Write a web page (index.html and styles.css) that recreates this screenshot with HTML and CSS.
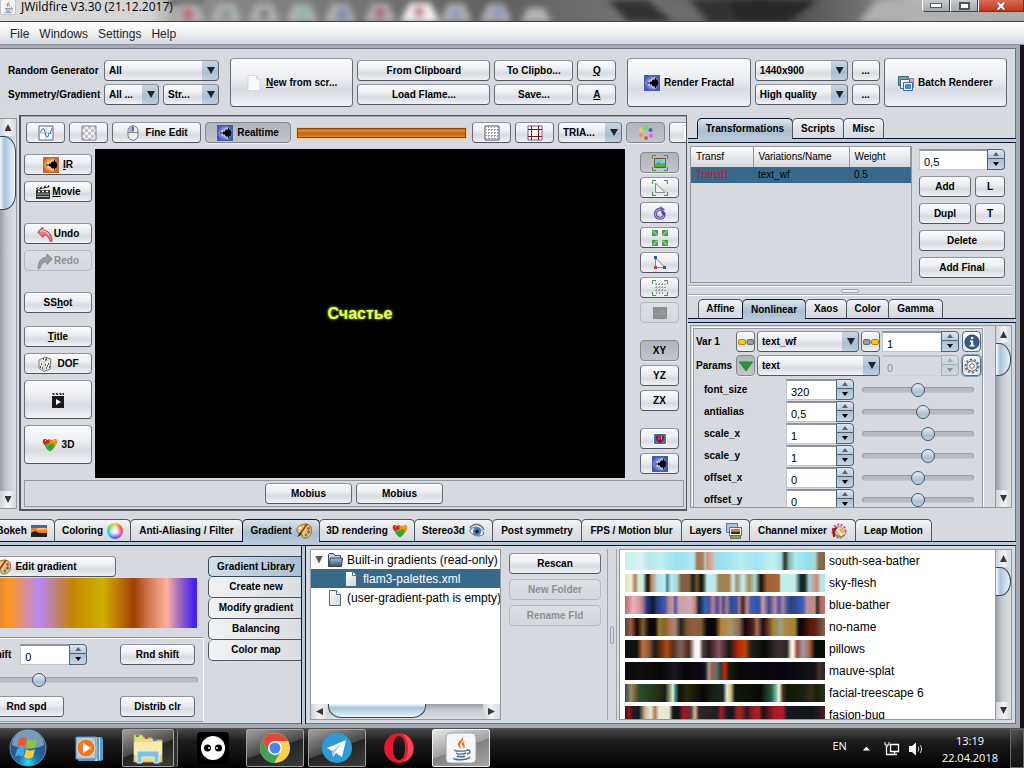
FILE: index.html
```html
<!DOCTYPE html>
<html lang="en">
<head>
	<meta charset="UTF-8">
	<meta name="viewport" content="width=device-width, initial-scale=1.0">
	<title>JWildfire V3.30 (21.12.2017)</title>
	<link rel="stylesheet" href="styles.css">
</head>
<body>
	<svg class="sprite" aria-hidden="true">
		<defs>
			<radialGradient id="g-blue"><stop offset="0" stop-color="#e8d8ff"/><stop offset=".6" stop-color="#7a86e0"/><stop offset="1" stop-color="#3f5cb0"/></radialGradient>
			<radialGradient id="g-warm"><stop offset="0" stop-color="#fff0a0"/><stop offset=".6" stop-color="#f0a050"/><stop offset="1" stop-color="#c8642c"/></radialGradient>
			<linearGradient id="g-doc" x2="1" y2="1"><stop offset="0" stop-color="#fff"/><stop offset="1" stop-color="#ccd6e0"/></linearGradient>
			<linearGradient id="g-folder" y2="1" x2="0"><stop offset="0" stop-color="#a8bfd2"/><stop offset="1" stop-color="#30506c"/></linearGradient>
			<radialGradient id="g-orb" cy=".9"><stop offset="0" stop-color="#30e0ff"/><stop offset=".5" stop-color="#1478b4"/><stop offset="1" stop-color="#285a88"/></radialGradient>
			<filter id="soft"><feGaussianBlur stdDeviation="3"/></filter>
		</defs>
		<symbol id="i-set" viewBox="0 0 16 16"><path d="M1 8l3-1 1-2 2 1 1-3 2-1 2 1 1 2 1 3-1 3-1 2-2 1-2-1-1-3-2 1-1-2z" fill="#fff" opacity=".45"/><path d="M3 7.600h3V6.500h2v-1l1-1h2V3h1v1.500h1l1 2v1l1 .5-1 .5v1l-1 2h-1V13h-1v-1.500H9l-1-1v-1H6V8.500H3z" fill="#000"/></symbol>
		<symbol id="i-fractal" viewBox="0 0 16 16"><path fill="url(#g-blue)" d="M0 0h16v16H0z"/><use href="#i-set"/></symbol>
		<symbol id="i-fire" viewBox="0 0 16 16"><path fill="url(#g-warm)" d="M0 0h16v16H0z"/><use href="#i-set"/></symbol>
		<symbol id="i-page" viewBox="0 0 16 16"><path d="M2 .5h8l4 4v11H2z" fill="#fafafa" stroke="#c8cace" stroke-width=".6"/><path d="M10 .5v4h4z" fill="#d8dade"/></symbol>
		<symbol id="i-file" viewBox="0 0 16 16"><path d="M2.500.5h7l4 4v11h-11z" fill="url(#g-doc)" stroke="#556678"/><path d="M9.500.5v4h4" fill="#fff" stroke="#556678"/></symbol>
		<symbol id="i-folder" viewBox="0 0 16 16"><path d="M1.500 14V2.500l1-1h4l1.500 2h5.500V7" fill="#c0d0de" stroke="#3c4c60"/><path d="M1.500 14.500L3.500 6h12l-1 8.500z" fill="url(#g-folder)" stroke="#304258"/></symbol>
		<symbol id="i-wave" viewBox="0 0 16 16"><path d="M1 1h14v14H1z" fill="#fff" stroke="#5f5f8c"/><path d="M8 1v14M1 8h14" stroke="#b8b8d8"/><path d="M2 8l2-4h2l2 7 2 1 1-4 1 1 2-6" fill="none" stroke="#2a7ac0"/></symbol>
		<symbol id="i-checker" viewBox="0 0 16 16"><path d="M1 1h14v14H1z" fill="#f2f2f2"/><path d="M1 1h3v3H1zm6 0h3v3H7zM4 4h3v3H4zm6 0h3v3h-3zM1 7h3v3H1zm6 0h3v3H7zm-3 3h3v3H4zm6 0h3v3h-3zM13 1h2v3h-2zm0 6h2v3h-2zM1 13h3v2H1zm6 0h3v2H7z" fill="#c4c4c8"/><path d="M1 1h14v14H1z" fill="none" stroke="#8a7a96"/></symbol>
		<symbol id="i-mouse" viewBox="0 0 16 16"><rect x="3" y=".7" width="10" height="14.600" rx="5" fill="#ececee" stroke="#777"/><path d="M3.400 7V5.500A4.500 4.500 0 0 1 8 1v6z" fill="#98b4ec"/><path d="M8 1v6M3 7.500h10" stroke="#888"/><path d="M8 2v4" stroke="#555" stroke-width="1.500"/></symbol>
		<symbol id="i-clap" viewBox="0 0 16 16"><path d="M1 6h14v9H1z" fill="#333"/><path d="M1 4l13-3 .5 2.200L2 6z" fill="#222"/><path d="M3 5l2-2m2 1l2-2m2 1l2-2M3 7.500h2m2 0h2m2 0h2" stroke="#fff" stroke-width="1.300"/><path d="M2 10h12M2 12.500h12" stroke="#aaa"/></symbol>
		<symbol id="i-undo" viewBox="0 0 16 16"><path d="M.7 6L6 1v3c5 .5 9 4 9 11.300h-2C12 11 10 9 6 9v2.500z" fill="#ec8080" stroke="#a83a40" stroke-width=".9"/><path d="M3 5.700l3-2v1.500c3 0 5 1.500 6 3.500" stroke="#ffd0d0" fill="none"/></symbol>
		<symbol id="i-redo" viewBox="0 0 16 16"><path d="M15.300 6L10 1v3C5 4.500 1 8 1 15.300h2C4 11 6 9 10 9v2.500z" fill="#9a9ca0" stroke="#84868a" stroke-width=".9"/></symbol>
		<symbol id="i-dice" viewBox="0 0 16 16"><path d="M2 4l6-3 6 2-1 10-6 2.500L2 12z" fill="#f6f4e6" stroke="#777"/><path d="M2 4l5 2 7-3M7 6v9.500" fill="none" stroke="#aaa" stroke-width=".7"/><path d="M6 3h1M9 3h1M8 4h1M4 8h1M3 11h1M5 12h1M8 9h1M11 8h1M9 12h1M12 11h1M10 10h1" stroke="#222" stroke-width="1.500"/></symbol>
		<symbol id="i-clip" viewBox="0 0 16 16"><path d="M2 4h12v12H2z" fill="#1a1a1a"/><path d="M2 1h2l1 2H3zm3.500 0h2l1 2h-2zM9 1h2l1 2h-2zm3 0h2v2h-1z" fill="#333"/><path d="M6 7l5 3-5 3z" fill="#fff"/></symbol>
		<symbol id="i-hearts" viewBox="0 0 16 16"><path d="M5 10C2 8 .5 6 .7 4 1 1.500 4 1.500 5 3.300 6 1.500 9 2 8.500 5z" fill="#de2018"/><path d="M11 11c3-2 4.300-4.500 4.300-6.500 0-3-3-3.500-4.300-1.200C9.500 1.500 7 2.500 7.500 5z" fill="#f09010"/><path d="M8 14.500C5 12.500 3 10.500 3.300 8 3.500 5.500 7 5.300 8 7.500 9 5.300 12.300 5.500 12.600 8c.2 2.500-1.600 4.500-4.600 6.500z" fill="#30a820"/><path d="M3 4l1-1M12 4l1-.5M5.500 8.500l1-1" stroke="#fff" opacity=".7"/></symbol>
		<symbol id="i-grid" viewBox="0 0 16 16"><path d="M1 1h14v14H1z" fill="#fff" stroke="#5a5070"/><path d="M4.500 1v14M7.500 1v14M10.500 1v14M13.500 1v14M1 4.500h14M1 7.500h14M1 10.500h14M1 13.500h14" stroke="#999" stroke-dasharray="2 1"/></symbol>
		<symbol id="i-guides" viewBox="0 0 16 16"><path d="M1 1h14v14H1z" fill="#fff" stroke="#706080"/><path d="M4.500 1v14M11.500 1v14M1 4.500h14M1 11.500h14" stroke="#7c1018"/></symbol>
		<symbol id="i-dots" viewBox="0 0 16 16"><circle cx="8" cy="2.500" r="2" fill="#60dc60"/><circle cx="12.500" cy="5" r="2" fill="#5858dc"/><circle cx="13" cy="10.500" r="2" fill="#ec58e8"/><circle cx="8" cy="13" r="2" fill="#e05058"/><circle cx="3" cy="10.500" r="2" fill="#f09050"/><circle cx="3" cy="5" r="2" fill="#ecd058"/></symbol>
		<symbol id="i-corners" viewBox="0 0 16 16"><path d="M.5 4V.5H4M12 .5h3.500V4M15.500 12v3.500H12M4 15.500H.5V12" fill="none" stroke="#3c9448"/></symbol>
		<symbol id="i-photo" viewBox="0 0 16 16"><use href="#i-corners"/><path d="M2.500 3.500h11v9h-11z" fill="#6cc8f0" stroke="#805030"/><path d="M3 9l4-2 3 2 3-1v4H3z" fill="#54b040"/><path d="M9 4h4v3z" fill="#f0c040"/></symbol>
		<symbol id="i-tri" viewBox="0 0 16 16"><use href="#i-corners"/><path d="M3.500 3v9.500H13z" fill="#f4f4f4" stroke="#888"/></symbol>
		<symbol id="i-spin" viewBox="0 0 16 16"><path d="M11 4.500C7 3 3.500 5.500 3.500 9c0 5 7 5.500 8.500 1.500.5-2-1-3.500-2.500-3" fill="none" stroke="#54409a" stroke-width="3"/><path d="M11 4.500C7 3 3.500 5.500 3.500 9c0 5 7 5.500 8.500 1.500" fill="none" stroke="#b8a8e4" stroke-width="1.200"/><path d="M8 1l5 3.500-4 3z" fill="#7460b4"/></symbol>
		<symbol id="i-four" viewBox="0 0 16 16"><path d="M0 0h6v5L5 6H0zM10 0h6v6h-5l-1-1zM0 10h5l1 1v5H0zM11 10h5v6h-6v-5z" fill="#4c9c50"/><path d="M1 1l4 4M15 1l-4 4M1 15l4-4M15 15l-4-4" stroke="#98cc98" stroke-width="1.500"/></symbol>
		<symbol id="i-pts" viewBox="0 0 16 16"><path d="M3.500 3v9.500H13z" fill="#f4f4f4" stroke="#888"/><path d="M2 1h3v3H2zM11 11h3v3h-3z" fill="#2858a8"/><path d="M2 11h3v3H2z" fill="#e03030"/></symbol>
		<symbol id="i-cgrid" viewBox="0 0 16 16"><use href="#i-corners"/><path d="M4.500 3v11M7.500 3v11M10.500 3v11M3 4.500h11M3 7.500h11M3 10.500h11" stroke="#999" stroke-dasharray="2 1"/></symbol>
		<symbol id="i-grey" viewBox="0 0 16 16"><path d="M1 2h14v12H1z" fill="#8c8e90"/><path d="M2 8h6V4l6 3v3H2z" fill="#a0a2a4" opacity=".5"/></symbol>
		<symbol id="i-balloon" viewBox="0 0 16 16"><path d="M1.500 2.500h13v11h-13z" fill="#4470b0" stroke="#fff"/><path d="M8 12.500C2 8 3 3.500 8 3.500s6 4.500 0 9z" fill="#801848"/><path d="M7 4v5" stroke="#e04040" stroke-width="1.500"/><path d="M9.500 4.500v4" stroke="#e0a0c0"/></symbol>
		<symbol id="i-batch" viewBox="0 0 16 16"><path d="M.5 1.500h10v9H.5z" fill="#70b068" stroke="#486088"/><path d="M7.500 3.500h8v9h-8z" fill="#e8a0b0" stroke="#7888a8"/><path d="M2.500 4.500h9v9h-9z" fill="#f4f8fc" stroke="#4068a0"/><path d="M5.500 7.500h9v8h-9z" fill="#fff" stroke="#4068a0"/><path d="M7 9h6v5H7z" fill="#4888d0"/></symbol>
		<symbol id="i-sunset" viewBox="0 0 16 16"><path d="M0 2h16v12H0z" fill="#4068b0"/><path d="M0 5h16v5H0z" fill="#f08030"/><path d="M6 5h9v2H6z" fill="#f0c070"/><path d="M0 10l4-2 4 2h8v4H0z" fill="#202020"/></symbol>
		<symbol id="i-palette" viewBox="0 0 16 16"><path d="M1 6C3 1 12-1 15 4c2 5-1 11-6 11-2 0-3-1-3-3 0-3-6 0-5-6z" fill="#f0c070" stroke="#9c6420"/><circle cx="12.500" cy="5.500" r="1.400" fill="#e04040"/><circle cx="12.500" cy="9" r="1.400" fill="#3060e0"/><circle cx="10" cy="12" r="1.400" fill="#30a040"/><circle cx="4" cy="5" r="1.300" fill="#fff"/><path d="M11 1L4 11" stroke="#7c4818" stroke-width="1.600"/><path d="M4.500 9L1 14l4-2z" fill="#202020"/></symbol>
		<symbol id="i-eye" viewBox="0 0 16 16"><path d="M.5 8C4 2 12 3 15 11c-4 3-10 3-14.500-3z" fill="#f4f4f8" stroke="#667"/><circle cx="8" cy="8.500" r="4" fill="#4080c0"/><circle cx="8" cy="8.500" r="1.800" fill="#102030"/><path d="M1 5C4 0 12 0 15 7" fill="none" stroke="#707478" stroke-width="1.500"/></symbol>
		<symbol id="i-layers" viewBox="0 0 16 16"><path d="M.5.5h11v9H.5z" fill="#a8c4e8" stroke="#607898"/><path d="M4.500 12.500h10v3h-10z" fill="#70b050" stroke="#607048"/><path d="M3.500 4.500h12v8h-12z" fill="#fff" stroke="#606870"/><path d="M5 6h9v5H5z" fill="#e87020"/><path d="M5 9h9v2H5z" fill="#402018"/></symbol>
		<symbol id="i-mixer" viewBox="0 0 16 16"><circle cx="8" cy="8" r="6.500" fill="none" stroke="#c84cb0" stroke-width="2" stroke-dasharray="2 1.500"/><path d="M3 8a6 6 0 0 0 10 4" fill="none" stroke="#4ca860" stroke-width="2"/><path d="M4 7l5-4 6 7-5 4z" fill="#f4e4c8" stroke="#c08020"/><path d="M1 6l6-3-3 6v5H2z" fill="#b01818"/><path d="M9 6l3 4" stroke="#f0a020" stroke-width="2"/></symbol>
		<symbol id="i-led-l" viewBox="0 0 16 16"><rect x=".5" y="5.500" width="7" height="5" rx="1.500" fill="#f8c818" stroke="#b08808"/><rect x="9" y="5.500" width="6.500" height="5" rx="1.500" fill="#9a9c9e" stroke="#66686a"/></symbol>
		<symbol id="i-led-r" viewBox="0 0 16 16"><rect x=".5" y="5.500" width="6.500" height="5" rx="1.500" fill="#9a9c9e" stroke="#66686a"/><rect x="8.500" y="5.500" width="7" height="5" rx="1.500" fill="#f8c818" stroke="#b08808"/></symbol>
		<symbol id="i-down" viewBox="0 0 16 16"><path d="M1.500 4h13L8 13z" fill="#18a020" stroke="#388040"/></symbol>
		<symbol id="i-info" viewBox="0 0 16 16"><circle cx="8" cy="8" r="7" fill="#3c5c84" stroke="#203858"/><path d="M7 3h2.200v2H7zM6 6.500h3.200V11h1.300v1.500H5.700V11H7V8H6z" fill="#fff"/></symbol>
		<symbol id="i-gear" viewBox="0 0 16 16"><circle cx="8" cy="8" r="6.600" fill="none" stroke="#666a70" stroke-width="1.600" stroke-dasharray="2.200 1.900"/><circle cx="8" cy="8" r="5.200" fill="#e8eaee" stroke="#666a70"/><circle cx="8" cy="8" r="2.300" fill="#fff" stroke="#666a70"/></symbol>
		<symbol id="i-java" viewBox="0 0 32 32"><rect x="1" y="1" width="30" height="30" rx="4" fill="#f4f6f8" stroke="#98a4b0"/><path d="M17 4c2 4-5 5-4 9 1 2 2 3 3 4 0-3-2-4 0-6s3-4 1-7zM20 9c-4 2-4 3-2 5 1 1 0 2-1 3 4-2 3-3 2-5 0-1 0-2 1-3z" fill="#e87020"/><path d="M10 18c-2 1 10 2 13 0M11 21c3 2 8 1 10 0M12 24c3 1 6 1 8 0M9 26c-2 2 13 3 16-1M22 18c4-1 4 3 0 4" fill="none" stroke="#486c90" stroke-width="1.400"/></symbol>
	</svg>

	<header class="titlebar">
		<svg class="glass" viewBox="0 0 860 22" preserveAspectRatio="xMinYMin slice" aria-hidden="true">
			<g filter="url(#soft)">
				<path d="M440 0h130l30 22H460zM0 0h34v4H0z" fill="#303030"/>
				<path d="M480 0h40l20 22h-34z" fill="#6c6c6c"/>
				<path d="M560 0h90l-30 22h-50z" fill="#262626"/>
				<path d="M690 22l20-22h150v22z" fill="#b0b0b0"/>
				<path d="M5 22l8-18h16l8 18zM42 22l8-18h16l8 18zM80 22l8-18h16l8 18zM118 22l8-18h16l8 18zM156 22l8-18h16l8 18zM196 22l8-18h16l8 18zM272 22l8-18h16l8 18zM312 22l8-18h16l8 18zM352 22l8-14h16l8 14z" fill="#b4b4b4"/>
				<path d="M232 22l10-19h20l10 19z" fill="#f4f4f4"/>
				<g opacity=".8">
					<circle cx="20" cy="14" r="6" fill="#c04858"/><circle cx="58" cy="14" r="6" fill="#7c9484"/><circle cx="96" cy="14" r="5" fill="#606470"/><circle cx="135" cy="13" r="6" fill="#78bc98"/><circle cx="174" cy="14" r="7" fill="#7488ac"/><circle cx="212" cy="13" r="6" fill="#a85868"/><circle cx="251" cy="12" r="6" fill="#c06070"/><circle cx="288" cy="14" r="6" fill="#8890c0"/><circle cx="330" cy="13" r="7" fill="#8c94c4"/>
				</g>
			</g>
		</svg>
		<svg class="app-icon"><use href="#i-java"/></svg>
		<h1>JWildfire V3.30 (21.12.2017)</h1>
		<div class="win-buttons">
			<button aria-label="Minimize"><i class="min"></i></button>
			<button aria-label="Maximize"><i class="max"></i></button>
			<button class="close" aria-label="Close"><svg viewBox="0 0 12 8"><path d="M1 0h3l2 2 2-2h3L8 4l3 4H8L6 6 4 8H1l3-4z" fill="#fff" stroke="#603028" stroke-width=".6"/></svg></button>
		</div>
	</header>

	<nav class="menubar">
		<a href="#file">File</a>
		<a href="#windows">Windows</a>
		<a href="#settings">Settings</a>
		<a href="#help">Help</a>
	</nav>

	<main class="frame">
		<!-- top toolbar -->
		<section class="toolbar">
			<div class="random">
				<label for="rnd-gen">Random Generator</label>
				<span class="combo wide"><select id="rnd-gen"><option>All</option></select></span>
				<label for="rnd-sym">Symmetry/Gradient</label>
				<span class="combo"><select id="rnd-sym"><option>All ...</option></select></span>
				<span class="combo"><select aria-label="Gradient"><option>Str...</option></select></span>
			</div>
			<button class="btn big gap-l"><svg><use href="#i-page"/></svg><span><u>N</u>ew from scr...</span></button>
			<div class="clip">
				<button class="btn">From Clipboard</button>
				<button class="btn">To Clipbo...</button>
				<button class="btn"><u>Q</u></button>
				<button class="btn">Load Flame...</button>
				<button class="btn">Save...</button>
				<button class="btn"><u>A</u></button>
			</div>
			<button class="btn big gap-l"><svg><use href="#i-fractal"/></svg>Render Fractal</button>
			<div class="quality">
				<span class="combo"><select aria-label="Resolution"><option>1440x900</option></select></span>
				<button class="btn">...</button>
				<span class="combo"><select aria-label="Quality"><option>High quality</option></select></span>
				<button class="btn">...</button>
			</div>
			<button class="btn big"><svg><use href="#i-batch"/></svg>Batch Renderer</button>
		</section>

		<section class="middle">
			<div class="vscroll thumbs">
				<button class="arrow up" aria-label="Scroll up"></button>
				<div class="vtrack"><div class="vthumb long"></div></div>
				<button class="arrow down" aria-label="Scroll down"></button>
			</div>

			<!-- flame preview -->
			<div class="preview">
				<div class="preview-top">
					<button class="btn icon" aria-label="Waves"><svg><use href="#i-wave"/></svg></button>
					<button class="btn icon" aria-label="Transparency"><svg><use href="#i-checker"/></svg></button>
					<button class="btn fine"><svg><use href="#i-mouse"/></svg>Fine Edit</button>
					<button class="btn realtime pressed"><svg><use href="#i-fractal"/></svg>Realtime</button>
					<div class="progress" role="progressbar" aria-label="Render progress"></div>
					<button class="btn icon" aria-label="Grid"><svg><use href="#i-grid"/></svg></button>
					<button class="btn icon" aria-label="Guides"><svg><use href="#i-guides"/></svg></button>
					<span class="combo tria"><select aria-label="Triangle style"><option>TRIA...</option></select></span>
					<button class="btn icon pressed" aria-label="Colors"><svg><use href="#i-dots"/></svg></button>
					<button class="btn icon last" aria-label="Page"><svg><use href="#i-page"/></svg></button>
				</div>
				<div class="preview-main">
					<div class="side-left">
						<button class="btn"><svg><use href="#i-fire"/></svg><span><u>I</u>R</span></button>
						<button class="btn tight"><svg><use href="#i-clap"/></svg><span><u>M</u>ovie</span></button>
						<button class="btn tight group"><svg><use href="#i-undo"/></svg>Undo</button>
						<button class="btn tight" disabled><svg><use href="#i-redo"/></svg>Redo</button>
						<button class="btn group"><span>SS<u>h</u>ot</span></button>
						<button class="btn half"><span><u>T</u>itle</span></button>
						<button class="btn"><svg><use href="#i-dice"/></svg>DOF</button>
						<button class="btn tall" aria-label="Animation"><svg><use href="#i-clip"/></svg></button>
						<button class="btn tall"><svg><use href="#i-hearts"/></svg>3D</button>
					</div>
					<div class="canvas"><span>Счастье</span></div>
					<div class="side-right">
						<button class="btn icon pressed" aria-label="Image"><svg><use href="#i-photo"/></svg></button>
						<button class="btn icon" aria-label="Move triangle"><svg><use href="#i-tri"/></svg></button>
						<button class="btn icon" aria-label="Rotate"><svg><use href="#i-spin"/></svg></button>
						<button class="btn icon" aria-label="Scale"><svg><use href="#i-four"/></svg></button>
						<button class="btn icon" aria-label="Edit points"><svg><use href="#i-pts"/></svg></button>
						<button class="btn icon" aria-label="View grid"><svg><use href="#i-cgrid"/></svg></button>
						<button class="btn icon" aria-label="Gradient" disabled><svg><use href="#i-grey"/></svg></button>
						<button class="btn icon group pressed">XY</button>
						<button class="btn icon">YZ</button>
						<button class="btn icon">ZX</button>
						<button class="btn icon group" aria-label="Background"><svg><use href="#i-balloon"/></svg></button>
						<button class="btn icon" aria-label="Render"><svg><use href="#i-fractal"/></svg></button>
					</div>
				</div>
				<div class="mobius">
					<button class="btn">Mobius</button>
					<button class="btn">Mobius</button>
				</div>
			</div>

			<!-- transformations -->
			<aside class="editor">
				<div class="tabs tabs-trans" role="tablist">
					<button class="tab active" role="tab">Transformations</button>
					<button class="tab" role="tab">Scripts</button>
					<button class="tab" role="tab">Misc</button>
				</div>
				<div class="trans">
					<div class="trans-table">
						<table>
							<thead>
								<tr><th class="c1">Transf</th><th class="c2">Variations/Name</th><th>Weight</th></tr>
							</thead>
							<tbody>
								<tr><td class="red">Transf1</td><td>text_wf</td><td>0.5</td></tr>
							</tbody>
						</table>
					</div>
					<div class="trans-buttons">
						<span class="spinner full"><input type="text" value="0,5" aria-label="Weight"><button aria-label="Up"></button><button aria-label="Down"></button></span>
						<button class="btn">Add</button>
						<button class="btn">L</button>
						<button class="btn">Dupl</button>
						<button class="btn">T</button>
						<button class="btn full">Delete</button>
						<button class="btn full">Add Final</button>
					</div>
				</div>
				<div class="hsplit"><i></i></div>
				<div class="tabs tabs-edit" role="tablist">
					<button class="tab" role="tab">Affine</button>
					<button class="tab active" role="tab">Nonlinear</button>
					<button class="tab" role="tab">Xaos</button>
					<button class="tab" role="tab">Color</button>
					<button class="tab" role="tab">Gamma</button>
				</div>
				<div class="nonlinear">
					<div class="vars">
						<div class="var-row">
							<label for="var1">Var 1</label>
							<button class="btn sq" aria-label="Previous"><svg><use href="#i-led-l"/></svg></button>
							<span class="combo"><select id="var1"><option>text_wf</option></select></span>
							<button class="btn sq" aria-label="Next"><svg><use href="#i-led-r"/></svg></button>
							<span class="spinner"><input type="text" value="1" aria-label="Variation amount"><button aria-label="Up"></button><button aria-label="Down"></button></span>
							<button class="btn sq info" aria-label="Info"><svg><use href="#i-info"/></svg></button>
						</div>
						<div class="var-row">
							<label for="params">Params</label>
							<button class="btn sq pressed" aria-label="Collapse"><svg><use href="#i-down"/></svg></button>
							<span class="combo span2"><select id="params"><option>text</option></select></span>
							<span class="spinner off"><input type="text" value="0" aria-label="Parameter" disabled><button aria-label="Up" disabled></button><button aria-label="Down" disabled></button></span>
							<button class="btn sq info focus" aria-label="Settings"><svg><use href="#i-gear"/></svg></button>
						</div>
						<div class="param">
							<label for="p1">font_size</label>
							<span class="spinner"><input type="text" id="p1" value="320"><button aria-label="Up"></button><button aria-label="Down"></button></span>
							<input type="range" value="50" aria-label="font_size">
						</div>
						<div class="param">
							<label for="p2">antialias</label>
							<span class="spinner"><input type="text" id="p2" value="0,5"><button aria-label="Up"></button><button aria-label="Down"></button></span>
							<input type="range" value="55" aria-label="antialias">
						</div>
						<div class="param">
							<label for="p3">scale_x</label>
							<span class="spinner"><input type="text" id="p3" value="1"><button aria-label="Up"></button><button aria-label="Down"></button></span>
							<input type="range" value="60" aria-label="scale_x">
						</div>
						<div class="param">
							<label for="p4">scale_y</label>
							<span class="spinner"><input type="text" id="p4" value="1"><button aria-label="Up"></button><button aria-label="Down"></button></span>
							<input type="range" value="60" aria-label="scale_y">
						</div>
						<div class="param">
							<label for="p5">offset_x</label>
							<span class="spinner"><input type="text" id="p5" value="0"><button aria-label="Up"></button><button aria-label="Down"></button></span>
							<input type="range" value="50" aria-label="offset_x">
						</div>
						<div class="param">
							<label for="p6">offset_y</label>
							<span class="spinner"><input type="text" id="p6" value="0"><button aria-label="Up"></button><button aria-label="Down"></button></span>
							<input type="range" value="50" aria-label="offset_y">
						</div>
					</div>
					<div class="vscroll">
						<button class="arrow up" aria-label="Scroll up"></button>
						<div class="vtrack"><div class="vthumb"></div></div>
						<button class="arrow down" aria-label="Scroll down"></button>
					</div>
				</div>
			</aside>
		</section>

		<!-- bottom tabs -->
		<div class="tabs tabs-bottom" role="tablist">
			<button class="tab" role="tab"><span>Bokeh</span><svg><use href="#i-sunset"/></svg></button>
			<button class="tab" role="tab">Coloring<i class="wheel"></i></button>
			<button class="tab" role="tab">Anti-Aliasing / Filter</button>
			<button class="tab active" role="tab">Gradient<svg><use href="#i-palette"/></svg></button>
			<button class="tab" role="tab">3D rendering<svg><use href="#i-hearts"/></svg></button>
			<button class="tab" role="tab">Stereo3d<svg><use href="#i-eye"/></svg></button>
			<button class="tab" role="tab">Post symmetry</button>
			<button class="tab" role="tab">FPS / Motion blur</button>
			<button class="tab" role="tab">Layers<svg><use href="#i-layers"/></svg></button>
			<button class="tab" role="tab">Channel mixer<svg><use href="#i-mixer"/></svg></button>
			<button class="tab" role="tab">Leap Motion</button>
		</div>

		<section class="bottom">
			<div class="edit">
				<button class="btn edit-btn"><svg><use href="#i-palette"/></svg>Edit gradient</button>
				<div class="strip current"></div>
				<div class="shift">
					<div class="shift-row">
						<label for="shift">Shift</label>
						<span class="spinner"><input type="text" id="shift" value="0"><button aria-label="Up"></button><button aria-label="Down"></button></span>
						<button class="btn">Rnd shift</button>
					</div>
					<input type="range" value="22" aria-label="Shift">
					<div class="shift-row">
						<button class="btn">Rnd spd</button>
						<button class="btn">Distrib clr</button>
					</div>
				</div>
			</div>
			<div class="vtabs" role="tablist">
				<button class="active" role="tab">Gradient Library</button>
				<button role="tab">Create new</button>
				<button role="tab">Modify gradient</button>
				<button role="tab">Balancing</button>
				<button role="tab">Color map</button>
			</div>
			<div class="library">
				<div class="tree">
					<ul>
						<li><i class="open"></i><svg><use href="#i-folder"/></svg>Built-in gradients (read-only)</li>
						<li class="child selected"><svg><use href="#i-file"/></svg>flam3-palettes.xml</li>
						<li class="leaf"><svg><use href="#i-file"/></svg>(user-gradient-path is empty)</li>
					</ul>
					<div class="hscroll">
						<button class="arrow left" aria-label="Scroll left"></button>
						<div class="htrack"><div class="hthumb"></div></div>
						<button class="arrow right" aria-label="Scroll right"></button>
					</div>
				</div>
				<div class="folder-buttons">
					<button class="btn">Rescan</button>
					<button class="btn" disabled>New Folder</button>
					<button class="btn" disabled>Rename Fld</button>
				</div>
				<div class="vsplit"><i></i></div>
				<div class="palettes">
					<ul>
						<li><i class="strip sea"></i>south-sea-bather</li>
						<li><i class="strip sky"></i>sky-flesh</li>
						<li><i class="strip blue"></i>blue-bather</li>
						<li><i class="strip noname"></i>no-name</li>
						<li><i class="strip pillows"></i>pillows</li>
						<li><i class="strip mauve"></i>mauve-splat</li>
						<li><i class="strip tree-scape"></i>facial-treescape 6</li>
						<li><i class="strip bug"></i>fasion-bug</li>
					</ul>
					<div class="vscroll">
						<button class="arrow up" aria-label="Scroll up"></button>
						<div class="vtrack"><div class="vthumb short"></div></div>
						<button class="arrow down" aria-label="Scroll down"></button>
					</div>
				</div>
			</div>
		</section>
	</main>

	<footer class="taskbar">
		<button class="start" aria-label="Start">
			<svg viewBox="0 0 38 38"><circle cx="19" cy="19" r="18" fill="url(#g-orb)" stroke="#6c94b0"/><path d="M3 16a16 15 0 0 1 32 0c-10 5-22 5-32 0z" fill="#c8dcec" opacity=".5"/><path d="M10 10c3-2 5-2 8 0l-2 8c-3-2-5-2-8 0z" fill="#e8582c"/><path d="M19 10c3 2 5 2 9 0l-2 8c-3 2-6 2-9 0z" fill="#8cc43c"/><path d="M8 20c3-2 5-2 8 0l-2 8c-3-2-5-2-8 0z" fill="#48a4e4"/><path d="M17 20c3 2 6 2 9 0l-2 8c-3 2-6 2-9 0z" fill="#f8cc38"/></svg>
		</button>
		<button class="task" aria-label="Media Player"><svg viewBox="0 0 32 32"><path d="M5 5h24l1 3v20l-3 1H5z" fill="#5c9cc8"/><path d="M22 5h2v24h-2zM26 6h1v22h-1z" fill="#c8e4f4"/><path d="M3 5h20v22H3z" fill="#a0cce4" stroke="#6090b0"/><circle cx="13" cy="16" r="9" fill="#f07820" stroke="#fff" stroke-width=".6"/><path d="M10 11l8 5-8 5z" fill="#fff"/></svg></button>
		<button class="task open-task stack" aria-label="Explorer"><svg viewBox="0 0 32 32"><path d="M2 3h8l2 3h8l1 2h9v22H2z" fill="#f0d880" stroke="#c8a850"/><path d="M4 3h3v2H4z" fill="#30b030"/><path d="M13 5h3v2h-3z" fill="#e04020"/><path d="M21 7h4v2h-4z" fill="#3090e0"/><path d="M2 10h28v13H2z" fill="#f8ecac"/><path d="M5 31V21c0-2 1-2 2-2h18c1 0 2 0 2 2v10h-5v-6H10v6z" fill="#80c4e0" stroke="#d8f0f8"/></svg></button>
		<button class="task" aria-label="Alien"><svg viewBox="0 0 32 32"><rect width="32" height="32" rx="4"/><circle cx="16" cy="16" r="12" fill="#fff"/><circle cx="10.500" cy="16" r="3.500"/><circle cx="21.500" cy="16" r="3.500"/><circle cx="12" cy="16" r="1" fill="#fff"/><circle cx="20" cy="16" r="1" fill="#fff"/></svg></button>
		<button class="task open-task" aria-label="Chrome"><svg viewBox="0 0 32 32"><circle cx="16" cy="16" r="15" fill="#fcd048"/><path d="M3 8.500A15 15 0 0 1 29 9H16l-7 10z" fill="#e04838"/><path d="M3 8.500l6.500 11.300L22 19l-7 12A15 15 0 0 1 3 8.500z" fill="#40a05c"/><circle cx="16" cy="16" r="7" fill="#fff"/><circle cx="16" cy="16" r="5.500" fill="#4884f0"/></svg></button>
		<button class="task open-task" aria-label="Telegram"><svg viewBox="0 0 32 32"><circle cx="16" cy="16" r="15" fill="#2c9cd8"/><path d="M6 16l19-8-4 17-6-4-3 4-1-6z" fill="#fff"/><path d="M11 19l10-8-7 9-2 5z" fill="#a8cce4"/></svg></button>
		<button class="task" aria-label="Opera"><svg viewBox="0 0 32 32"><path fill-rule="evenodd" d="M16 1a15 15 0 1 0 .1 0zM16 4c4 0 6 5 6 12s-2 12-6 12-6-5-6-12 2-12 6-12z" fill="#e41830"/><path d="M19 2c14 3 15 25 1 28 4-3 5-8 5-14s-2-11-6-14z" fill="#f84c58"/></svg></button>
		<button class="task open-task current" aria-label="JWildfire"><svg viewBox="0 0 32 32"><use href="#i-java"/></svg></button>
		<div class="tray">
			<span class="lang">EN</span>
			<i class="more"></i>
			<svg viewBox="0 0 16 16"><path d="M6.500 3.500h8v7h-8zM8 13.500h5M10.500 11v2M2.500 5v8.500H8" fill="none" stroke="#fff" stroke-width="1.300"/><path d="M1 1v3h4V1M3 4v2" fill="none" stroke="#fff"/></svg>
			<svg viewBox="0 0 16 16"><path d="M1 5h3l4-3.500v13L4 11H1z" fill="#fff"/><path d="M10 5.500c1 1.500 1 3.500 0 5M12 4c2 2.500 2 5.500 0 8" fill="none" stroke="#ddd"/></svg>
			<time>13:19<br>22.04.2018</time>
		</div>
		<button class="desktop" aria-label="Show desktop"></button>
	</footer>
</body>
</html>
```
FILE: styles.css
```css
*, *:before, *:after {
	box-sizing: border-box;
}
html, body {
	height: 100%;
	margin: 0;
}
body {
	display: flex;
	flex-direction: column;
	overflow: hidden;
	background: #171014;
	color: #000;
	font: bold 10px/12px "Liberation Sans", Arial, sans-serif;
}
button, input, select {
	font: inherit;
	color: inherit;
	margin: 0;
}
button {
	padding: 0;
	border: 0;
}
svg {
	width: 16px;
	height: 16px;
	flex: none;
}
ul {
	list-style: none;
	margin: 0;
	padding: 0;
}
.sprite {
	position: absolute;
	width: 0;
	height: 0;
}

/* title bar */
.titlebar {
	position: relative;
	display: flex;
	flex: none;
	height: 21px;
	overflow: hidden;
	background: linear-gradient(90deg, #dcdcdc 0, #d4d4d4 150px, #8c8c8c 190px, #606060 500px, #747474 640px, #404040 760px, #707070 860px, #c0c0c0 920px, #9c9c9c 100%);
}
.glass {
	position: absolute;
	left: 168px;
	top: 0;
	width: 860px;
	height: 22px;
}
.app-icon {
	margin-top: -1px;
}
.titlebar h1 {
	flex: 1;
	margin: 0 0 0 5px;
	font: 12px/14px "Open Sans", sans-serif;
}
.win-buttons {
	position: relative;
	display: flex;
	height: 12px;
}
.win-buttons button {
	width: 28px;
	border: 1px solid #404448;
	border-top: 0;
	border-left-color: #fff;
	background: linear-gradient(#c8ccd0, #a4a8ac);
}
.win-buttons button:first-child {
	border-radius: 0 0 0 4px;
}
.win-buttons .close {
	width: 46px;
	background: linear-gradient(#d86c54, #c03820);
}
.win-buttons svg {
	display: block;
	width: 12px;
	height: 8px;
	margin: 0 auto;
}
.win-buttons i {
	display: block;
	margin: 0 auto;
	background: #fff;
	border: 1px solid #50545a;
}
.win-buttons .min {
	width: 12px;
	height: 5px;
}
.win-buttons .max {
	width: 11px;
	height: 8px;
	border-width: 2px;
}

.menubar {
	display: flex;
	flex: none;
	gap: 10px;
	height: 24px;
	padding: 5px 10px 0;
	border-top: 1px solid #404448;
	border-bottom: 1px solid #8c929c;
	background: linear-gradient(#fff, #f4f5f7 40%, #d9dce2 90%);
	font-size: 12px;
	font-weight: normal;
	line-height: 15px;
}
.menubar a {
	color: #222428;
	text-decoration: none;
}

.frame {
	display: flex;
	flex: 1;
	flex-direction: column;
	min-height: 0;
	margin-right: 4px;
	border: solid #a3a9b5;
	border-width: 3px 4px 4px 0;
	background: #d6d9df;
	box-shadow: inset -1px 1px #6c7484, inset 0 -1px #6c7484;
}

/* buttons */
.btn {
	display: flex;
	align-items: center;
	justify-content: center;
	gap: 4px;
	height: 21px;
	border: 1px solid #686c74;
	border-top-color: #90949c;
	border-bottom-color: #50545c;
	border-radius: 4px;
	background: linear-gradient(#fbfbfd, #eceef1 40%, #d8dbe1 65%, #f0f2f6);
	white-space: nowrap;
}
.btn:disabled {
	color: #8e8f91;
	border-color: #b4b8c0;
	background: linear-gradient(#dcdfe4, #d4d7dd);
}
.btn.pressed {
	border-color: #85898f;
	background: linear-gradient(#b0b4bb, #c2c5cb);
	box-shadow: 0 1px #eceef2;
}
.btn.icon {
	width: 39px;
	flex: none;
}
.btn.sq {
	width: 19px;
	overflow: hidden;
}
.btn.info {
	border-color: #506c88;
}
.btn.focus {
	box-shadow: 0 0 0 1px #73a4d1;
}

.combo {
	display: grid;
	min-width: 0;
}
.combo:after {
	content: "";
	grid-area: 1 / 1;
	place-self: center end;
	width: 8px;
	height: 7px;
	margin-right: 4px;
	background: #20242c;
	clip-path: polygon(0 0, 100% 0, 50% 100%);
	pointer-events: none;
}
.combo select {
	grid-area: 1 / 1;
	width: 100%;
	height: 21px;
	min-width: 0;
	padding: 0 17px 0 4px;
	appearance: none;
	border: 1px solid #686c74;
	border-top-color: #90949c;
	border-bottom-color: #50545c;
	border-radius: 4px;
	background:
		linear-gradient(#c8d6e2, #a9bfd1 60%, #bcd0e0) right / 16px 100% no-repeat,
		linear-gradient(#fbfbfd, #eceef1 40%, #d8dbe1 65%, #f0f2f6);
}

.spinner {
	display: grid;
	grid-template: 10px 11px / 1fr 18px;
	font-weight: normal;
}
.spinner input {
	grid-row: 1 / 3;
	min-width: 0;
	width: 100%;
	padding: 3px 4px 0;
	border: 1px solid #c0c4cc;
	border-top: 2px solid #90949c;
	border-right: 0;
	background: #fff;
	font-size: 11px;
}
.spinner button {
	display: grid;
	place-items: center;
	border: 1px solid #4c6478;
	border-radius: 0 4px 0 0;
	background: linear-gradient(#e0e6ec, #b9cad8);
}
.spinner button:last-child {
	border-top: 0;
	border-radius: 0 0 4px 0;
	background: linear-gradient(#a9bfd1, #c4d6e4);
}
.spinner button:before {
	content: "";
	width: 6px;
	height: 4px;
	background: #586470;
	clip-path: polygon(0 100%, 100% 100%, 50% 0);
}
.spinner button:last-child:before {
	background: #000;
	clip-path: polygon(0 0, 100% 0, 50% 100%);
}
.spinner.off {
	opacity: .35;
}
.spinner.off input {
	background: #d6d9df;
}

input[type=range] {
	width: 100%;
	height: 14px;
	appearance: none;
	background: none;
}
input[type=range]::-webkit-slider-runnable-track {
	height: 6px;
	border: 1px solid #9a9ea6;
	border-bottom-color: #c4c8ce;
	border-radius: 3px;
	background: #b6bac2;
}
input[type=range]::-webkit-slider-thumb {
	width: 14px;
	height: 14px;
	margin-top: -5px;
	appearance: none;
	border: 1px solid #44586a;
	border-radius: 50%;
	background: linear-gradient(#e4ecf2, #a9c0d2 70%, #c4d8e6);
}

/* tabs */
.tabs {
	display: grid;
	flex: none;
	border-bottom: 1px solid #10142c;
	box-shadow: 0 3px #b8c9da, 0 4px #10142c;
	margin-bottom: 4px;
}
.tab {
	display: flex;
	align-items: center;
	justify-content: center;
	gap: 4px;
	border: 1px solid #50545c;
	border-bottom: 0;
	border-radius: 5px 5px 0 0;
	margin-right: -1px;
	background: linear-gradient(#f4f5f7, #dfe2e6 50%, #d6d9df);
	white-space: nowrap;
	min-width: 0;
}
.tab.active {
	border-color: #10142c;
	background: linear-gradient(#dce5ec, #a8bed0 60%, #b8c9da);
	margin-bottom: -1px;
}

/* scrollbars */
.vscroll {
	display: flex;
	flex: none;
	flex-direction: column;
	width: 16px;
	border-left: 1px solid #9498a0;
}
.arrow {
	display: grid;
	place-items: center;
	flex: none;
	height: 17px;
	background: linear-gradient(90deg, #d0d3d9, #f2f3f5 50%, #d6d9df);
}
.arrow:before {
	content: "";
	width: 7px;
	height: 7px;
	background: #383838;
}
.arrow.up:before {
	clip-path: polygon(0 100%, 100% 100%, 50% 0);
}
.arrow.down:before {
	clip-path: polygon(0 0, 100% 0, 50% 100%);
}
.arrow.left:before {
	clip-path: polygon(100% 0, 100% 100%, 0 50%);
}
.arrow.right:before {
	clip-path: polygon(0 0, 0 100%, 100% 50%);
}
.vtrack {
	flex: 1;
	background: linear-gradient(90deg, #9a9ea6, #c6c9cf 40%, #dcdfe3);
}
.vthumb {
	height: 33px;
	border: 1px solid #30485c;
	border-left: 0;
	border-radius: 0 12px 12px 0 / 0 16px 16px 0;
	background: linear-gradient(90deg, #f4fafe, #a9c4d8 30%, #e8f6ff);
}
.vthumb.short {
	height: 29px;
}
.vthumb.long {
	height: 74px;
}

/* top toolbar */
.toolbar {
	display: flex;
	flex: none;
	align-items: center;
	gap: 4px;
	padding: 10px 9px 8px 8px;
}
.random {
	display: grid;
	grid-template-columns: 92px 55px 56px;
	gap: 3px 4px;
	align-items: center;
	width: 211px;
}
.random label {
	white-space: nowrap;
}
.random .wide {
	grid-column: 2 / 4;
}
.btn.big {
	flex: 1;
	height: 49px;
	gap: 4px;
}
.gap-l {
	margin-left: 7px;
}
.clip {
	display: grid;
	grid-template-columns: 133px 79px 39px;
	gap: 3px 4px;
}
.quality {
	display: grid;
	grid-template-columns: 93px 28px;
	gap: 3px 4px;
}

/* middle */
.middle {
	display: flex;
	flex: 1;
	min-height: 0;
}
.vscroll.thumbs {
	width: 17px;
	margin: 3px 2px 2px 0;
	border: solid #9498a0;
	border-width: 1px 1px 1px 0;
}
.preview {
	display: flex;
	flex: 1;
	flex-direction: column;
	min-width: 0;
	border: solid #54585e;
	border-width: 1px 1px 2px 2px;
	box-shadow: inset 0 1px #a0a4aa;
}
.preview-top {
	display: flex;
	flex: none;
	align-items: center;
	gap: 4px;
	height: 33px;
	padding-left: 5px;
	overflow: hidden;
}
.preview-top .last {
	margin-right: -22px;
}
.fine {
	flex: none;
	width: 89px;
}
.realtime {
	flex: none;
	width: 86px;
	margin-right: 1px;
}
.progress {
	flex: 1;
	height: 12px;
	margin-right: 1px;
	border: 1px solid #c88038;
	outline: 1px solid #ecc898;
	outline-offset: -1px;
	background: linear-gradient(#b85c08, #e09040 30%, #b86008 50%, #e8953c);
	box-shadow: inset 0 0 0 1px #8c4408;
}
.preview-top .combo {
	flex: none;
	width: 64px;
}
.preview-main {
	display: flex;
	flex: 1;
	min-height: 0;
}
.side-left {
	display: flex;
	flex: none;
	flex-direction: column;
	gap: 6px;
	width: 71px;
	padding: 5px 0 0 3px;
	margin-right: 3px;
}
.side-left .btn {
	width: 68px;
	flex: none;
}
.side-left .tight {
	gap: 1px;
}
.side-left .group {
	margin-top: 15px;
}
.side-left .half {
	margin-top: 7px;
}
.side-left .tall {
	height: 39px;
}
.canvas {
	display: grid;
	flex: 1;
	place-items: center;
	background: #000;
}
.canvas span {
	color: #e8f858;
	font: bold 16px/24px "Liberation Sans", Arial, sans-serif;
	text-shadow: 0 0 2px #a0d020, 0 0 4px #507818;
}
.side-right {
	display: flex;
	flex: none;
	flex-direction: column;
	gap: 4px;
	padding: 3px 7px 0 15px;
}
.side-right .group {
	margin-top: 13px;
}
.mobius {
	display: flex;
	flex: none;
	justify-content: center;
	gap: 4px;
	margin: 2px 2px 2px 3px;
	padding: 2px;
	border: 1px solid #9498a0;
}
.mobius .btn {
	width: 87px;
}

/* right side editor */
.editor {
	display: flex;
	flex: none;
	flex-direction: column;
	width: 329px;
	padding: 3px 0 3px 1px;
}
.tabs-trans {
	grid-template-columns: 95px 51px 40px;
	height: 21px;
	padding-left: 9px;
}
.trans {
	display: flex;
	flex: none;
	height: 137px;
	margin-top: 3px;
	padding-left: 2px;
}
.trans-table {
	width: 222px;
	border: 1px solid #9498a0;
}
.trans-table table {
	width: 100%;
	border-collapse: collapse;
	table-layout: fixed;
	font-weight: normal;
}
th {
	height: 20px;
	padding: 0 0 0 5px;
	border-right: 1px solid #9498a0;
	background: linear-gradient(#fafbfc, #d4d7dd);
	font-weight: normal;
	text-align: left;
}
.c1 {
	width: 62px;
}
.c2 {
	width: 96px;
}
td {
	height: 16px;
	padding: 0 0 0 5px;
	background: #39698a;
}
td.red {
	color: #d01030;
}
.trans-buttons {
	display: grid;
	grid-template-columns: 52px 30px;
	align-content: start;
	gap: 6px 4px;
	padding: 3px 0 0 7px;
}
.full {
	grid-column: 1 / 3;
}
.hsplit {
	flex: none;
	height: 10px;
	margin: 2px 4px 4px 0;
	border: solid #a0a4ac;
	border-width: 1px 0;
	box-shadow: 0 1px #f8f9fa, inset 0 1px #f8f9fa;
}
.hsplit i {
	display: block;
	width: 18px;
	height: 4px;
	margin: 3px auto 0;
	border: 1px solid #9ca0a8;
	border-radius: 2px;
	background: #eceef2;
}
.tabs-edit {
	grid-template-columns: 44px 63px 41px 42px 54px;
	height: 20px;
	padding-left: 10px;
}
.nonlinear {
	display: flex;
	flex: 1;
	min-height: 0;
	margin: 2px 4px 0 2px;
	border: 1px solid #9498a0;
	overflow: hidden;
}
.vars {
	flex: 1;
	min-width: 0;
	margin: 2px 12px 0 2px;
	padding: 2px 0 0 2px;
	border: solid #9498a0;
	border-width: 1px 1px 0;
	box-shadow: 1px 0 #fff, -1px -1px #fff;
	overflow: hidden;
}
.var-row {
	display: grid;
	grid-template-columns: 38px 19px 1fr 19px 77px 21px;
	gap: 2px;
	align-items: center;
	margin-bottom: 3px;
}
.var-row .info {
	margin-left: 1px;
}
.span2 {
	grid-column: 3 / 5;
}
.param {
	display: grid;
	grid-template-columns: 82px 68px 112px;
	align-items: center;
	margin-bottom: 1px;
	padding-left: 8px;
}
.param input[type=range] {
	margin-left: 8px;
}

/* bottom */
.tabs-bottom {
	grid-template-columns: 66px 76px 112px 77px 95px 78px 89px 100px 68px 106px 76px;
	height: 23px;
	margin-top: 8px;
	margin-left: -12px;
}
.wheel {
	width: 16px;
	height: 16px;
	border-radius: 50%;
	background: radial-gradient(#fff 15%, transparent 60%), conic-gradient(#ffd040, #f05030, #f040c0, #6050f0, #30c0f0, #40e060, #ffd040);
}
.bottom {
	display: flex;
	flex: none;
	height: 178px;
	overflow: hidden;
}
.edit {
	flex: none;
	width: 220px;
	margin-left: -16px;
	padding-top: 10px;
}
.edit-btn {
	width: 132px;
	margin-bottom: 1px;
	padding-right: 28px;
}
.strip {
	display: block;
	height: 18px;
}
.strip.current {
	width: 213px;
	height: 50px;
	margin-bottom: 9px;
	background: linear-gradient(90deg, #e88838 16px, #ff9820 25px, #b888f8 55px, #c48008 88px, #c89400 98px, #d0b000 119px, #b87008 136px, #a04000 150px, #d07850 165px, #ffb0a0 183px, #8c5cc8 198px, #4820f0 210px);
}
.shift {
	height: 85px;
	padding: 6px 8px 0 4px;
	border: 1px solid #9498a0;
	border-right-color: #fff;
	box-shadow: inset 0 1px #fff;
}
.shift-row {
	display: flex;
	justify-content: space-between;
	align-items: center;
}
.shift-row .spinner {
	width: 67px;
	margin: 0 auto 0 9px;
}
.shift-row .btn {
	width: 75px;
}
.shift input[type=range] {
	display: block;
	margin: 8px 0 9px;
	width: 209px;
}
.vtabs {
	flex: none;
	width: 99px;
	margin-right: 7px;
	padding: 10px 0 0 4px;
}
.vtabs button {
	display: block;
	width: 95px;
	height: 21px;
	border: 1px solid #50545c;
	border-top: 0;
	border-right: 0;
	border-radius: 5px 0 0 5px;
	background: linear-gradient(90deg, #f2f3f5, #d9dce1);
	white-space: nowrap;
}
.vtabs .active {
	border-color: #30485c;
	background: linear-gradient(90deg, #d4e0e8, #a8bed0);
	border-top: 1px solid #30485c;
}
.library {
	display: flex;
	flex: 1;
	min-width: 0;
	margin-left: -5px;
	padding: 3px 4px 4px 4px;
	border-left: 1px solid #10142c;
	box-shadow: -3px 0 #b8c9da, -4px 0 #10142c;
}
.tree {
	display: flex;
	flex: none;
	flex-direction: column;
	justify-content: space-between;
	width: 191px;
	border: 1px solid #9498a0;
	background: #fff;
	overflow: hidden;
	font-size: 12px;
	font-weight: normal;
}
.tree li {
	display: flex;
	align-items: center;
	gap: 4px;
	height: 19px;
	white-space: nowrap;
}
.tree .open {
	flex: none;
	width: 8px;
	height: 8px;
	margin-left: 4px;
	background: #585858;
	clip-path: polygon(0 0, 100% 0, 50% 100%);
}
.tree .child {
	padding-left: 32px;
}
.tree .leaf {
	padding-left: 16px;
}
.tree .selected {
	color: #fff;
	background: #39698a;
}
.hscroll {
	display: flex;
	height: 15px;
}
.hscroll .arrow {
	width: 17px;
	height: 15px;
}
.htrack {
	flex: 1;
	background: linear-gradient(#9a9ea6, #c6c9cf 40%, #dcdfe3);
}
.hthumb {
	width: 98px;
	height: 14px;
	border: 1px solid #30485c;
	border-top: 0;
	border-radius: 0 0 14px 14px / 0 0 12px 12px;
	background: linear-gradient(#f4fafe, #a9c4d8 30%, #e8f6ff);
}
.folder-buttons {
	display: flex;
	flex: none;
	flex-direction: column;
	gap: 5px;
	width: 106px;
	padding: 4px 6px 0 8px;
}
.vsplit {
	display: grid;
	flex: none;
	align-items: center;
	width: 10px;
	margin: 0 2px 0 0;
	border: solid #a0a4ac;
	border-width: 0 1px;
}
.vsplit i {
	width: 4px;
	height: 18px;
	margin-left: 2px;
	border: 1px solid #9ca0a8;
	border-radius: 2px;
}
.palettes {
	display: flex;
	flex: 1;
	min-width: 0;
	border: 1px solid #9498a0;
	background: #fff;
	overflow: hidden;
	font-size: 12px;
	font-weight: normal;
}
.palettes ul {
	flex: 1;
	padding-left: 5px;
}
.palettes li {
	display: flex;
	align-items: center;
	gap: 4px;
	height: 22px;
}
.palettes .strip {
	width: 200px;
}
.sea {
	background: linear-gradient(90deg, #c4f0ee, #d8f4f4 8%, #b4e8ea 12%, #c4f0f0 18%, #98e0f0 26%, #b0e8f4 34%, #b0c8b8 35%, #a87850 36%, #a88058 39%, #a8d0d0 40%, #c89078 41%, #e0a890 43%, #a0dce8 45%, #98e0f4 50%, #b8ecf0 58%, #a0e4f4 66%, #c4f0f0 74%, #a8e0e8 78%, #203028 80%, #90b0a0 82%, #a8ecf4 85%, #90dcf0 92%, #a8d8d8 95%, #8a6848 97%, #88664a);
}
.sky {
	background: linear-gradient(90deg, #f0d8b0, #f0f4dc 3%, #a88858 5%, #d8f0e0 7%, #c8e8e0 9%, #182010 11%, #302818 12%, #c87850 13%, #b0e0e8 16%, #b8ecf4 20%, #508080 21%, #b0e8f0 23%, #a8d8d8 26%, #806040 28%, #80603c 32%, #182010 34%, #785030 36%, #101808 38%, #283020 39%, #b8ecf4 41%, #c0e8e8 45%, #a08050 47%, #a88050 52%, #c8f0f0 54%, #a09070 56%, #c8f4f4 59%, #a88858 62%, #a0d8d8 65%, #100c08 68%, #a06030 71%, #a86838 77%, #c0f0e8 78%, #c0ecf0 85%, #102020 88%, #203028 90%, #a0d0e0 92%, #d08868 96%, #b0e8f0 98%, #b0e8f0);
}
.blue {
	background: linear-gradient(90deg, #b86868, #f0b0c0 4%, #d898a0 7%, #a87888 9%, #203888 11%, #101828 14%, #283880 16%, #4058b8 20%, #c08880 22%, #c890a0 24%, #4058b0 25%, #c8a0a8 27%, #d0a8b0 33%, #c08880 35%, #182030 37%, #3860b8 40%, #3c58a8 42%, #c88080 44%, #4050a8 46%, #c07870 48%, #3850a8 49%, #a88080 51%, #304898 53%, #3858b0 56%, #b07868 57%, #382838 59%, #c88880 61%, #3860b8 63%, #3850a8 67%, #c8a0a0 69%, #384890 72%, #c08898 75%, #4058b0 77%, #c08080 79%, #3858b0 81%, #304070 83%, #2c4ca0 86%, #4060c0 89%, #c09090 91%, #c08880 95%, #202c28 96%, #b86860 98%, #c87068);
}
.noname {
	background: linear-gradient(90deg, #385038, #a85848 3%, #180808 6%, #806028 9%, #100808 12%, #080808 15%, #907828 17%, #806828 20%, #b07870 23%, #b08870 25%, #202020 28%, #785828 31%, #985848 34%, #806030 38%, #080808 41%, #080808 45%, #b88038 48%, #a09868 53%, #887058 57%, #180808 60%, #502020 64%, #a87058 66%, #181010 69%, #602820 71%, #a08030 74%, #98a090 78%, #b08840 80%, #a08038 85%, #080808 87%, #180808 89%, #581808 92%, #602018 95%, #80684c);
}
.pillows {
	background: linear-gradient(90deg, #101010, #101410 6%, #c87040 9%, #885838 12%, #201818 15%, #a04008 20%, #b04808 21%, #503020 24%, #886050 28%, #482820 32%, #f8f0f0 35%, #f8f8f8 37%, #503838 39%, #281818 42%, #885058 47%, #181818 52%, #c02808 57%, #b84808 60%, #202018 63%, #080c08 70%, #403030 77%, #302828 81%, #f0e0c8 83%, #ffffff 84%, #a84828 86%, #9898b0 89%, #b86848 92%, #081008 95%, #081008);
}
.mauve {
	background: linear-gradient(90deg, #08080c, #101010 7%, #080808 18%, #181820 25%, #080408 30%, #100818 38%, #181020 40%, #90a890 42%, #c05840 43%, #507068 46%, #303838 48%, #d82008 50%, #182008 52%, #080808 57%, #080410 80%, #101418 92%, #181018 95%, #483028 97%, #202830);
}
.tree-scape {
	background: linear-gradient(90deg, #284848, #a08868 3%, #80602c 5%, #285028 7%, #204828 10%, #283018 16%, #182010 20%, #e8f0c8 24%, #4098b0 25%, #101008 27%, #282808 31%, #080808 39%, #182010 44%, #182820 49%, #e8f0d0 51%, #d8b878 53%, #101808 55%, #080c08 68%, #285838 73%, #50a898 75%, #f8f8d8 77%, #483018 79%, #101808 81%, #182010 89%, #382818 93%, #182008 96%, #283018);
}
.bug {
	background: linear-gradient(90deg, #401010, #901820 2%, #201c20 4%, #181820 7%, #c8b898 10%, #f0e8d0 13%, #a87858 15%, #f0e8d0 17%, #e8e8d0 22%, #181418 24%, #181818 27%, #a01820 29%, #981820 31%, #484040 33%, #d8b898 35%, #302428 37%, #202024 46%, #a81c20 48%, #201820 51%, #18181c 54%, #a02028 56%, #a82028 58%, #301820 61%, #a01c20 64%, #a82020 67%, #181418 69%, #b01820 75%, #a82028 79%, #181820 81%, #101418 94%, #482028);
}

/* taskbar */
.taskbar {
	display: flex;
	flex: none;
	height: 40px;
	border-top: 1px solid #505050;
	background: linear-gradient(#484848, #1c1c1c 12px, #0c0c0c 30px, #000);
	color: #fff;
	font: 11px/17px "Open Sans", sans-serif;
}
.start {
	width: 56px;
	background: none;
}
.start svg {
	width: 38px;
	height: 38px;
}
.task {
	width: 58px;
	height: 38px;
	margin-left: 4px;
	border: 1px solid transparent;
	border-radius: 2px;
	background: none;
}
.task svg {
	width: 32px;
	height: 32px;
	display: block;
	margin: auto;
}
.open-task {
	border-color: #a0a0a0;
	background: linear-gradient(160deg, #a0a0a0, #484848 50%, #242424 52%, #3c3c3c);
}
.stack {
	width: 52px;
	margin-right: 6px;
	box-shadow: 3px 0 #303030, 4px 0 #787878;
}
.task.current {
	border-color: #f0f0f0;
	background: linear-gradient(160deg, #e8e8e8, #a0a0a0 50%, #808080 52%, #a8a8a8);
}
.tray {
	display: flex;
	flex: 1;
	justify-content: flex-end;
	align-items: center;
	gap: 8px;
	padding-right: 12px;
}
.lang {
	margin-right: 8px;
	align-self: start;
	padding-top: 8px;
}
.more {
	width: 7px;
	height: 4px;
	margin-right: 6px;
	background: #fff;
	clip-path: polygon(0 100%, 100% 100%, 50% 0);
}
.tray time {
	margin-left: 10px;
	text-align: center;
}
.desktop {
	width: 14px;
	border: 1px solid #686868;
	background: linear-gradient(150deg, #585858, #202020 50%, #101010);
}
```
